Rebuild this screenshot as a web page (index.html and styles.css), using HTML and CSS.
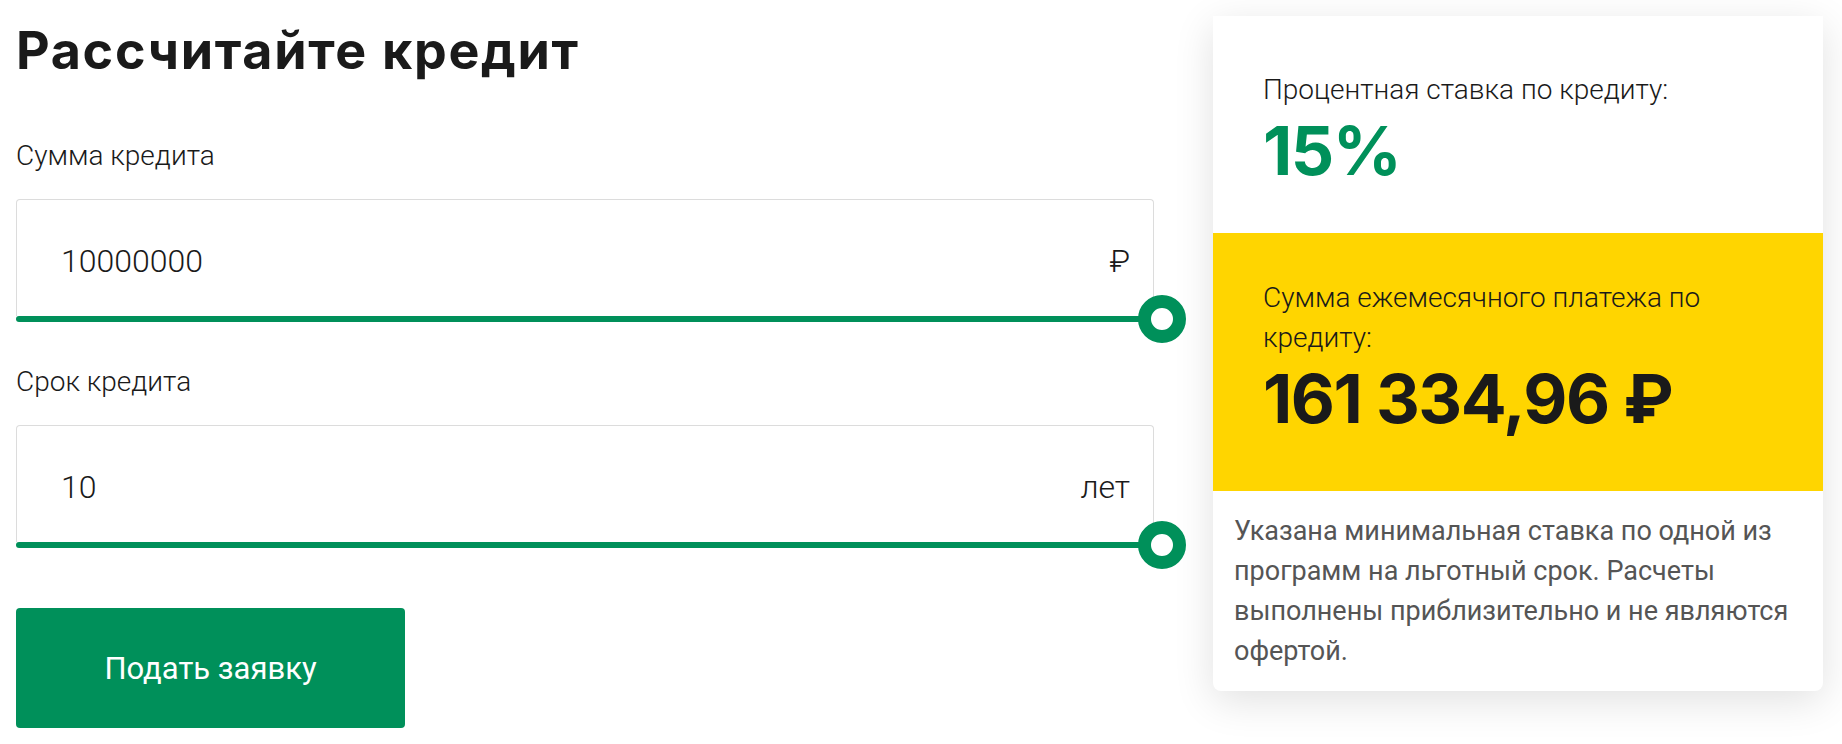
FILE: index.html
```html
<!DOCTYPE html>
<html lang="ru">
<head>
<meta charset="utf-8">
<title>Рассчитайте кредит</title>
<link rel="stylesheet" href="styles.css">
</head>
<body>
<div class="page">
  <section class="calc">
    <h1 class="title">Рассчитайте кредит</h1>
    <div class="field">
      <div class="field-label">Сумма кредита</div>
      <div class="input">
        <span class="input-value">10000000</span>
        <span class="input-unit">₽</span>
      </div>
      <div class="track"><span class="knob"></span></div>
    </div>
    <div class="field">
      <div class="field-label">Срок кредита</div>
      <div class="input">
        <span class="input-value">10</span>
        <span class="input-unit">лет</span>
      </div>
      <div class="track"><span class="knob"></span></div>
    </div>
    <button class="submit" type="button">Подать заявку</button>
  </section>
  <aside class="card">
    <div class="card-rate">
      <div class="card-label">Процентная ставка по кредиту:</div>
      <div class="card-value green">15%</div>
    </div>
    <div class="card-payment">
      <div class="card-label">Сумма ежемесячного платежа по кредиту:</div>
      <div class="card-value">161 334,96 ₽</div>
    </div>
    <p class="card-note">Указана минимальная ставка по одной из программ на льготный срок. Расчеты выполнены приблизительно и не являются офертой.</p>
  </aside>
</div>
</body>
</html>
```

FILE: styles.css
```css
* { box-sizing: border-box; }
html, body { margin: 0; padding: 0; background: #fff; }
body { font-family: Roboto, "Noto Sans", sans-serif; color: #1a1a1a; }

.page {
  display: grid;
  grid-template-columns: 1fr 610px;
  column-gap: 59px;
  align-items: start;
  padding: 0 19px 0 16px;
  width: 1842px;
  height: 744px;
  overflow: hidden;
}

.calc {
  display: flex;
  flex-direction: column;
  padding-top: 21px;
}

.title {
  margin: 0 0 59px;
  font-family: Inter, "DejaVu Sans", sans-serif;
  font-weight: 700;
  font-size: 52px;
  line-height: 60px;
  letter-spacing: 1.7px;
  color: #1a1a1a;
}

.field { margin-bottom: 44px; }
.field:last-of-type { margin-bottom: 60px; }
.field-label {
  font-weight: 300;
  font-size: 28px;
  line-height: 32px;
  margin-bottom: 27px;
}

.input {
  height: 117px;
  border: 1px solid #dcdcdc;
  border-bottom: none;
  border-radius: 4px 4px 0 0;
  display: flex;
  justify-content: space-between;
  align-items: flex-start;
  padding: 42px 23px 0 44px;
  font-weight: 300;
  font-size: 32px;
  line-height: 38px;
}

.track {
  position: relative;
  height: 6px;
  border-radius: 3px;
  background: #00905a;
}
.knob {
  position: absolute;
  right: -32px;
  top: -21px;
  width: 48px;
  height: 48px;
  border-radius: 50%;
  border: 13px solid #00905a;
  background: #fff;
}

.submit {
  align-self: flex-start;
  display: flex;
  align-items: center;
  justify-content: center;
  width: 389px;
  height: 120px;
  border: none;
  border-radius: 4px;
  background: #00905a;
  color: #fff;
  font-family: Roboto, sans-serif;
  font-size: 31px;
  font-weight: 400;
}

.card {
  margin-top: 16px;
  background: #fff;
  border-radius: 0 0 8px 8px;
  box-shadow: 0 10px 40px rgba(0, 0, 0, 0.12);
}
.card-rate { padding: 54px 50px 43px; }
.card-payment { background: #ffd500; padding: 45px 60px 53px 50px; }
.card-label {
  font-weight: 300;
  font-size: 28px;
  line-height: 40px;
  color: #1a1a1a;
}
.card-value {
  font-family: Inter, "DejaVu Sans", sans-serif;
  font-weight: 700;
  font-size: 68px;
  line-height: 80px;
  letter-spacing: -1.5px;
  color: #1a1a1a;
}
.card-value.green { color: #00905a; }
.card-note {
  margin: 0;
  padding: 20px 12px 20px 21px;
  font-size: 27px;
  line-height: 40px;
  color: #555;
}
```
